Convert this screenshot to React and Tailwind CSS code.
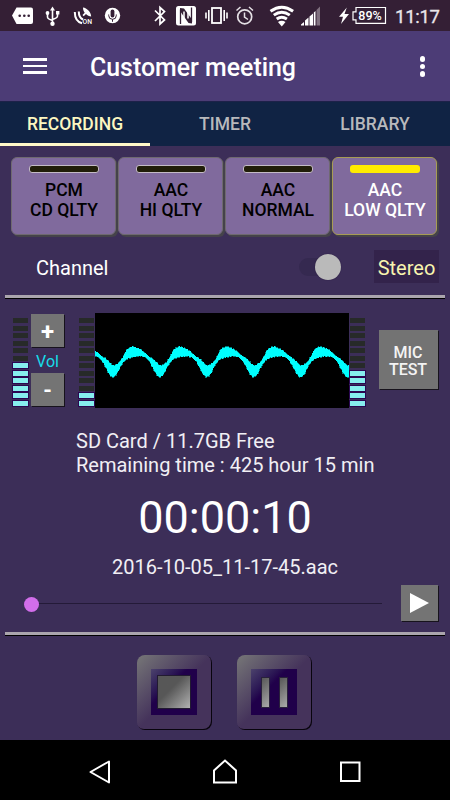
import { Fragment } from 'react'
import clsx from 'clsx'

const TABS = ['RECORDING', 'TIMER', 'LIBRARY']

const QUALITIES = [
  { id: 'pcm', top: 'PCM', bottom: 'CD QLTY' },
  { id: 'hi', top: 'AAC', bottom: 'HI QLTY' },
  { id: 'normal', top: 'AAC', bottom: 'NORMAL' },
  { id: 'low', top: 'AAC', bottom: 'LOW QLTY' },
]

/* one period of the wave: [x, upper edge, lower edge] */
const PERIOD = 46.9
const WAVE = [
  [0, 52.5, 64.5], [2.5, 52.5, 63], [5, 51, 60], [7.5, 49, 54], [11, 43.5, 49],
  [14, 37, 46], [17, 34.8, 45], [20.5, 33.5, 43.8], [24, 34.8, 43.5], [28, 36.5, 43],
  [32.5, 40, 44], [37, 44, 48.5], [40, 45.5, 54], [43, 48.5, 60], [46.9, 52.5, 64.5],
]

function sample(x, index) {
  const p = (((x - 17.5) % PERIOD) + PERIOD) % PERIOD
  const i = Math.max(1, WAVE.findIndex(point => point[0] >= p))
  const a = WAVE[i - 1]
  const b = WAVE[i]
  return a[index] + (b[index] - a[index]) * (p - a[0]) / (b[0] - a[0])
}

function wavePath() {
  const upper = []
  const lower = []
  for (let x = 0; x <= 254; x++) {
    const thick = sample(x, 2) - sample(x, 1)
    const jitter = thick > 5 ? Math.sin(x * 2.3) * 0.9 : 0
    upper.push(`${x},${(sample(x, 1) + jitter).toFixed(1)}`)
    lower.unshift(`${x},${(sample(x, 2) - jitter).toFixed(1)}`)
  }
  return `M${upper.join('L')}L${lower.join('L')}Z`
}

function StatusBar() {
  return (
    <div className="h-[31px] bg-[#341f35] text-white">
      <svg className="block" width="450" height="31" viewBox="0 0 450 31" fill="none">
        {/* message */}
        <path d="M12 15.500l4.500-8H31a2 2 0 0 1 2 2v12.500a2 2 0 0 1-2 2H16.500z" fill="#fff" />
        <g fill="#341f35">
          <circle cx="19.700" cy="15.700" r="1.300" /><circle cx="24.300" cy="15.700" r="1.300" /><circle cx="28.700" cy="15.700" r="1.300" />
        </g>
        {/* usb */}
        <path d="M52.500 9v15M47.500 13v4q0 2 5 3.500M57.500 12v4q0 2-5 3.500" stroke="#fff" strokeWidth="1.600" />
        <path d="M52.500 6.500l-2.500 4h5zM56 11h3.400v3.400H56z" fill="#fff" />
        <circle cx="47.500" cy="13" r="1.900" fill="#fff" /><circle cx="52.500" cy="23.700" r="2.200" fill="#fff" />
        {/* gps */}
        <path d="M74.800 12c0 6 2.700 10 7.200 11.300M78.800 11.500c0 4.500 1.700 7 4.200 8" stroke="#fff" strokeWidth="2" />
        <path d="M83 7.500c4 .5 8 4.500 8.200 9-2-.2-3.800-1-5.200-2.500l-2.300 2.200-1.200-1.200 2.200-2.200c-1.200-1.500-1.700-3.300-1.700-5.300z" fill="#fff" />
        <text x="82.500" y="24" fill="#fff" fontFamily="Roboto, sans-serif" fontSize="7.500" fontWeight="500" textLength="9.500" lengthAdjust="spacingAndGlyphs">ON</text>
        {/* mic */}
        <circle cx="112.500" cy="15.500" r="7.700" fill="#fff" />
        <rect x="110.600" y="9.500" width="3.800" height="8" rx="1.900" fill="#341f35" />
        <path d="M108.700 14.500v1a3.800 3.800 0 0 0 7.600 0v-1M112.500 19.300v2.500" stroke="#341f35" />
        {/* bluetooth */}
        <path d="M155 10.500l9.500 9.500-4.500 4V7.500l4.500 4-9.500 9.500" stroke="#fff" strokeWidth="1.700" />
        {/* nfc */}
        <rect x="176" y="6" width="20" height="19.500" rx="2.500" fill="#fff" />
        <path d="M180.500 24V9.500M191.500 7.500V22" stroke="#341f35" strokeWidth="1.300" />
        <path d="M180 8l4 .5 8 11v4l-3.500-.5-8.500-12z" fill="#341f35" />
        <path d="M184 11.500v11M188 8v10.500" stroke="#fff" strokeWidth="1.500" />
        {/* vibrate */}
        <rect x="212" y="8" width="9" height="15" stroke="#fff" strokeWidth="1.800" />
        <path d="M208.800 10v11M206 12.500v6M224.200 10v11M227 12.500v6" stroke="#fff" strokeWidth="1.600" />
        {/* alarm */}
        <circle cx="244.700" cy="16.800" r="7" stroke="#e5e0e5" strokeWidth="1.700" />
        <path d="M244.500 12.500v4.500l3.500 2.500M236.500 10.500l4-3.500M253 10.500l-4-3.500" stroke="#e5e0e5" strokeWidth="1.500" />
        {/* wifi */}
        <g stroke="#fff" strokeWidth="2.900">
          <path d="M270.500 11.300q11.300-8 22.600 0M273.800 15.200q8-6 16 0M276.700 19q5-3.700 10.200 0" />
        </g>
        <path d="M278 22q3.800-2.500 7.500 0l-3.700 4.500z" fill="#fff" />
        {/* signal */}
        <path d="M301 25.500v-1l3-2.500v3.500zM305 25.500v-5l3.500-3v8zM309.500 25.500v-9l3.500-3v12z" fill="#fff" />
        <path d="M313.800 25.500V12.500l1.700-1.500v14.500z" fill="#fff" />
        <path d="M316.500 25.500V10l3.500-3.500v19z" fill="#80707f" />
        {/* battery */}
        <path d="M346.800 7.500L339 16.800h4l-2 7.200 8-10h-4.500z" fill="#fff" />
        <path d="M356 7.500h29.500v15.800H356v-3.500h-3v-8h3z" stroke="#fff" strokeWidth="1.200" />
        <text x="358.300" y="20" fill="#fff" fontFamily="Roboto, sans-serif" fontSize="13" fontWeight="500" textLength="23.500" lengthAdjust="spacingAndGlyphs">89%</text>
        <text x="395" y="22.700" fill="#eae6ea" stroke="#eae6ea" strokeWidth="0.300" fontFamily="Roboto, sans-serif" fontSize="18.500" textLength="45">11:17</text>
      </svg>
    </div>
  )
}

function AppBar() {
  return (
    <header className="flex h-[70px] items-center bg-[#4c3c76] pl-[23px] pr-[25px]">
      <div className="flex w-6 flex-col gap-[4px]">
        <span className="h-[2.500px] bg-white" />
        <span className="h-[2.500px] bg-white" />
        <span className="h-[2.500px] bg-white" />
      </div>
      <h1 className="ml-[43px] mt-[2px] text-[25px] font-medium leading-none text-white">
        <svg className="block" width="210" height="32">
          <text x="0" y="24.500" fill="currentColor" textLength="206" lengthAdjust="spacingAndGlyphs">Customer meeting</text>
        </svg>
      </h1>
      <div className="ml-auto mt-px flex flex-col gap-[2px]">
        <span className="size-[5.500px] rounded-full bg-white" />
        <span className="size-[5.500px] rounded-full bg-white" />
        <span className="size-[5.500px] rounded-full bg-white" />
      </div>
    </header>
  )
}

function QualityButton({ top, bottom, active }) {
  return (
    <button
      type="button"
      className={clsx(
        'flex h-[78px] w-[105px] flex-col items-center rounded-[6px] border bg-[#806a9d] pt-[7px] text-[17.500px] font-medium leading-[20px] shadow-[2px_2px_0_#45434a]',
        active ? 'border-[#a79c55] text-white' : 'border-[#6f6970] text-black'
      )}
    >
      <span className={clsx('h-[8px] w-[70px] shrink-0 rounded-[3px]', active ? 'bg-[#ffeb00]' : 'border border-[#c4bbc6] bg-[#201d08]')} />
      <span className="mt-[7px] whitespace-nowrap pl-px">{top}<br />{bottom}</span>
    </button>
  )
}

function Meter({ lit }) {
  return (
    <div className="flex w-[15px] flex-col gap-[2.500px] pt-[5px]">
      {Array.from({ length: 12 }, (_, i) => (
        <span key={i} className={clsx('h-[5px]', i >= 12 - lit ? 'bg-[#86eeee] shadow-[0_0_0_1px_#2b0751]' : 'bg-[#272a29]')} />
      ))}
    </div>
  )
}

function Divider() {
  return <div className="mx-[5px] h-[4px] border-b border-black bg-[#aaa5ad]" />
}

function App() {
  return (
    <div className="flex h-[800px] w-[450px] flex-col overflow-hidden bg-[#3c2e58] font-['Roboto',sans-serif] text-white">
      <StatusBar />
      <AppBar />
      <nav className="grid h-[45px] grid-cols-3 border-t border-[#1d2149] bg-[#102344] text-[17.500px] font-medium">
        {TABS.map((tab, i) => (
          <div key={tab} className={clsx('flex items-center justify-center border-b-[3px] pt-[4px]', i === 0 ? 'border-[#fff8c8] text-[#fcf7c1]' : 'border-transparent text-[#b8b9bc]')}>{tab}</div>
        ))}
      </nav>

      <section className="flex gap-[2px] pl-[11px] pt-[11px]">
        {QUALITIES.map(q => <QualityButton key={q.id} {...q} active={q.id === 'low'} />)}
      </section>

      <section className="mt-[14px] flex h-[35px] items-center pl-[36px] pr-[11px] text-[20px]">
        <span className="pt-[2px]">Channel</span>
        <div className="ml-auto mr-[33px] flex h-[18px] w-[42px] items-center justify-end rounded-full bg-[#352950]">
          <span className="size-[26px] shrink-0 rounded-full bg-[#bababa] shadow-[0_0_1px_#211236]" />
        </div>
        <span className="flex h-[33px] w-[65px] items-center justify-center bg-[#33234b] pt-[3px] text-[#f8f5af]">Stereo</span>
      </section>

      <div className="mt-[11px]"><Divider /></div>

      <section className="mt-[14px] flex h-[95px] pl-[12.500px]">
        <Meter lit={6} />
        <div className="ml-[3.500px] flex w-[33px] flex-col items-center pt-px text-white">
          <button type="button" className="flex h-[33px] w-full shrink-0 items-center justify-center bg-[#747474] pt-[3px] text-[24px] font-bold leading-none shadow-[1px_1px_0_#17131c]">+</button>
          <span className="flex h-[26px] shrink-0 items-center pt-[3px] text-[16px] text-[#17dce9]">Vol</span>
          <button type="button" className="flex h-[33px] w-full shrink-0 items-center justify-center bg-[#747474] pt-[3px] text-[22px] font-bold leading-none shadow-[1px_1px_0_#17131c]">-</button>
        </div>
        <div className="ml-[15px] flex">
          <Meter lit={2} />
          <svg className="ml-[1px] block h-[95px] w-[254px] bg-black" viewBox="0 0 254 95" shapeRendering="crispEdges">
            <path d={wavePath()} fill="#00ffff" stroke="#00ffff" strokeWidth="0.500" />
          </svg>
          <div className="ml-[1px] flex"><Meter lit={5} /></div>
        </div>
        <button type="button" className="ml-[13.500px] mt-[17px] h-[59px] w-[59px] bg-[#737373] pt-[3px] text-[16px] font-medium leading-[17.500px] text-[#f3f3f3] shadow-[1px_1px_0_#17131c]">MIC<br />TEST</button>
      </section>

      <section className="flex flex-col items-center">
        <p className="mt-[21px] w-[298px] whitespace-nowrap text-[20px] leading-[24px] text-[#f1eff4]">
          SD Card / 11.7GB Free<br />Remaining time : 425 hour 15 min
        </p>
        <p className="mt-[13px] text-[45px] leading-[56px]">00:00:10</p>
        <p className="mt-[9px] text-[20px] leading-[24px] text-[#f1eff4]">2016-10-05_11-17-45.aac</p>
      </section>

      <section className="mt-[5px] flex h-[37px] items-center pl-[23.500px] pr-[12px]">
        <span className="mt-[4px] size-[15px] rounded-full bg-[#d26eea]" />
        <span className="mt-px h-px w-[343px] bg-[#241a38]" />
        <button type="button" className="ml-auto flex h-[36px] w-[37px] items-center justify-center bg-[#747474] shadow-[1px_1px_0_#17131c]">
          <svg width="19" height="22" viewBox="0 0 19 22"><path d="M0 1l19 10L0 21z" fill="#fff" /></svg>
        </button>
      </section>

      <div className="mt-[11px]"><Divider /></div>

      <section className="mt-[19px] flex gap-[25px] pl-[137px]">
        {['stop', 'pause'].map(action => (
          <Fragment key={action}>
            <button type="button" aria-label={action} className="flex size-[75px] items-center justify-center rounded-[8px] bg-linear-135 from-[#777777] to-[#45335b] to-50% shadow-[inset_-1px_-1px_0_#08040d]">
              <span className="mb-[1px] mr-[1px] flex size-[46px] items-center justify-center bg-linear-135 from-[#4c426c] to-[#20004a] to-40%">
                {action === 'stop' ? (
                  <span className="size-[34px] border border-[#221b31] bg-linear-135 from-[#575757] from-40% to-[#b2b2b2]" />
                ) : (
                  <span className="flex gap-[9px]">
                    <span className="h-[31px] w-[9px] border border-[#29213b] bg-linear-135 from-[#575757] to-[#aaaaaa]" />
                    <span className="h-[31px] w-[9px] border border-[#29213b] bg-linear-135 from-[#575757] to-[#aaaaaa]" />
                  </span>
                )}
              </span>
            </button>
          </Fragment>
        ))}
      </section>

      <footer className="mt-auto flex h-[60px] shrink-0 items-center justify-between bg-black pl-[87px] pr-[87px] pt-[3px]">
        <svg width="26" height="28" viewBox="0 0 26 28" fill="none" stroke="#fff" strokeWidth="2" strokeLinejoin="round">
          <path d="M3.500 14L22 3.500v21z" />
        </svg>
        <svg width="26" height="28" viewBox="0 0 26 28" fill="none" stroke="#fff" strokeWidth="2">
          <path d="M2 12.500L13 2.500l11 10v12H2z" />
        </svg>
        <svg width="26" height="28" viewBox="0 0 26 28" fill="none" stroke="#fff" strokeWidth="2">
          <path d="M4 4.500h18.500v18.500H4z" />
        </svg>
      </footer>
    </div>
  )
}

export default App
